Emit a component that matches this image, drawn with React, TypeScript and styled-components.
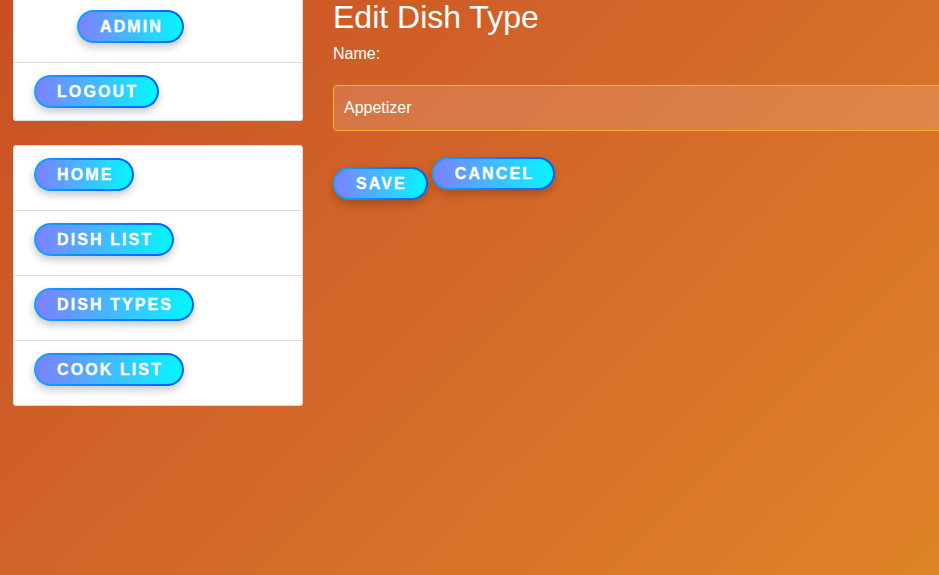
import React from "react";
import styled, { createGlobalStyle } from "styled-components";

const Global = createGlobalStyle`
  html, body { margin: 0; padding: 0; }
  body {
    font-family: "Liberation Sans", Arial, sans-serif;
    background: linear-gradient(135deg, #c94f23 0%, #d4692a 50%, #df8428 100%);
    min-height: 575px;
    overflow: hidden;
  }
`;

const Page = styled.div`
  display: flex;
  align-items: flex-start;
  gap: 30px;
  padding-left: 13px;
  min-height: 575px;
`;

const Sidebar = styled.aside`
  width: 290px;
  flex: none;
  display: flex;
  flex-direction: column;
  gap: 24px;
`;

const Card = styled.nav<{ $cutTop?: boolean }>`
  background: #fff;
  border: 1px solid #dcdcdc;
  border-radius: ${(p) => (p.$cutTop ? "0 0 3px 3px" : "3px")};
  border-top: ${(p) => (p.$cutTop ? "none" : "1px solid #dcdcdc")};
  display: flex;
  flex-direction: column;
`;

const Row = styled.div<{ $indent?: number; $top?: number; $bottom?: number }>`
  padding: ${(p) => p.$top ?? 12}px 20px ${(p) => p.$bottom ?? 19}px ${(p) => 20 + (p.$indent ?? 0)}px;
  & + & { border-top: 1px solid #dcdcdc; }
  display: flex;
`;

const Pill = styled.button<{ $lift?: number }>`
  display: inline-block;
  border: 2px solid transparent;
  border-radius: 20px;
  background:
    linear-gradient(to right, #7d80ff, #05f6ff) padding-box,
    linear-gradient(to right, #10a4ff, #005eff) border-box;
  color: #fff;
  font-family: "Liberation Sans", Arial, sans-serif;
  font-weight: 700;
  font-size: 16px;
  letter-spacing: 2.1px;
  line-height: 19px;
  padding: 5px 19px 5px 21px;
  box-shadow: 0 4px 9px rgba(0, 0, 0, 0.22);
  cursor: pointer;
  margin-top: ${(p) => p.$lift ?? 0}px;
  white-space: nowrap;
  -webkit-text-stroke: 0.3px #fff;
`;

const Main = styled.main`
  flex: 1;
  min-width: 0;
  color: #fff;
  display: flex;
  flex-direction: column;
`;

const Title = styled.h1`
  font-size: 32px;
  font-weight: 400;
  margin: 0;
  line-height: 34px;
`;

const Label = styled.label`
  font-size: 16px;
  margin-top: 11px;
  line-height: 18px;
`;

const Input = styled.input`
  margin-top: 22px;
  height: 46px;
  box-sizing: border-box;
  width: 640px;
  border: 1px solid #f6b028;
  border-radius: 4px;
  background: rgba(255, 255, 255, 0.14);
  color: #fff;
  font-family: "Liberation Sans", Arial, sans-serif;
  font-size: 16px;
  padding: 0 10px;
  outline: none;
`;

const Actions = styled.div`
  display: flex;
  align-items: flex-start;
  gap: 4px;
  margin-top: 26px;
`;

export default function App() {
  return (
    <>
      <Global />
      <Page>
        <Sidebar>
          <Card $cutTop>
            <Row $indent={43} $top={10}>
              <Pill>ADMIN</Pill>
            </Row>
            <Row $top={12} $bottom={12}>
              <Pill>LOGOUT</Pill>
            </Row>
          </Card>
          <Card>
            <Row><Pill>HOME</Pill></Row>
            <Row><Pill>DISH LIST</Pill></Row>
            <Row><Pill>DISH TYPES</Pill></Row>
            <Row><Pill>COOK LIST</Pill></Row>
          </Card>
        </Sidebar>
        <Main>
          <Title>Edit Dish Type</Title>
          <Label htmlFor="name">Name:</Label>
          <Input id="name" defaultValue="Appetizer" />
          <Actions>
            <Pill $lift={10}>SAVE</Pill>
            <Pill>CANCEL</Pill>
          </Actions>
        </Main>
      </Page>
    </>
  );
}
